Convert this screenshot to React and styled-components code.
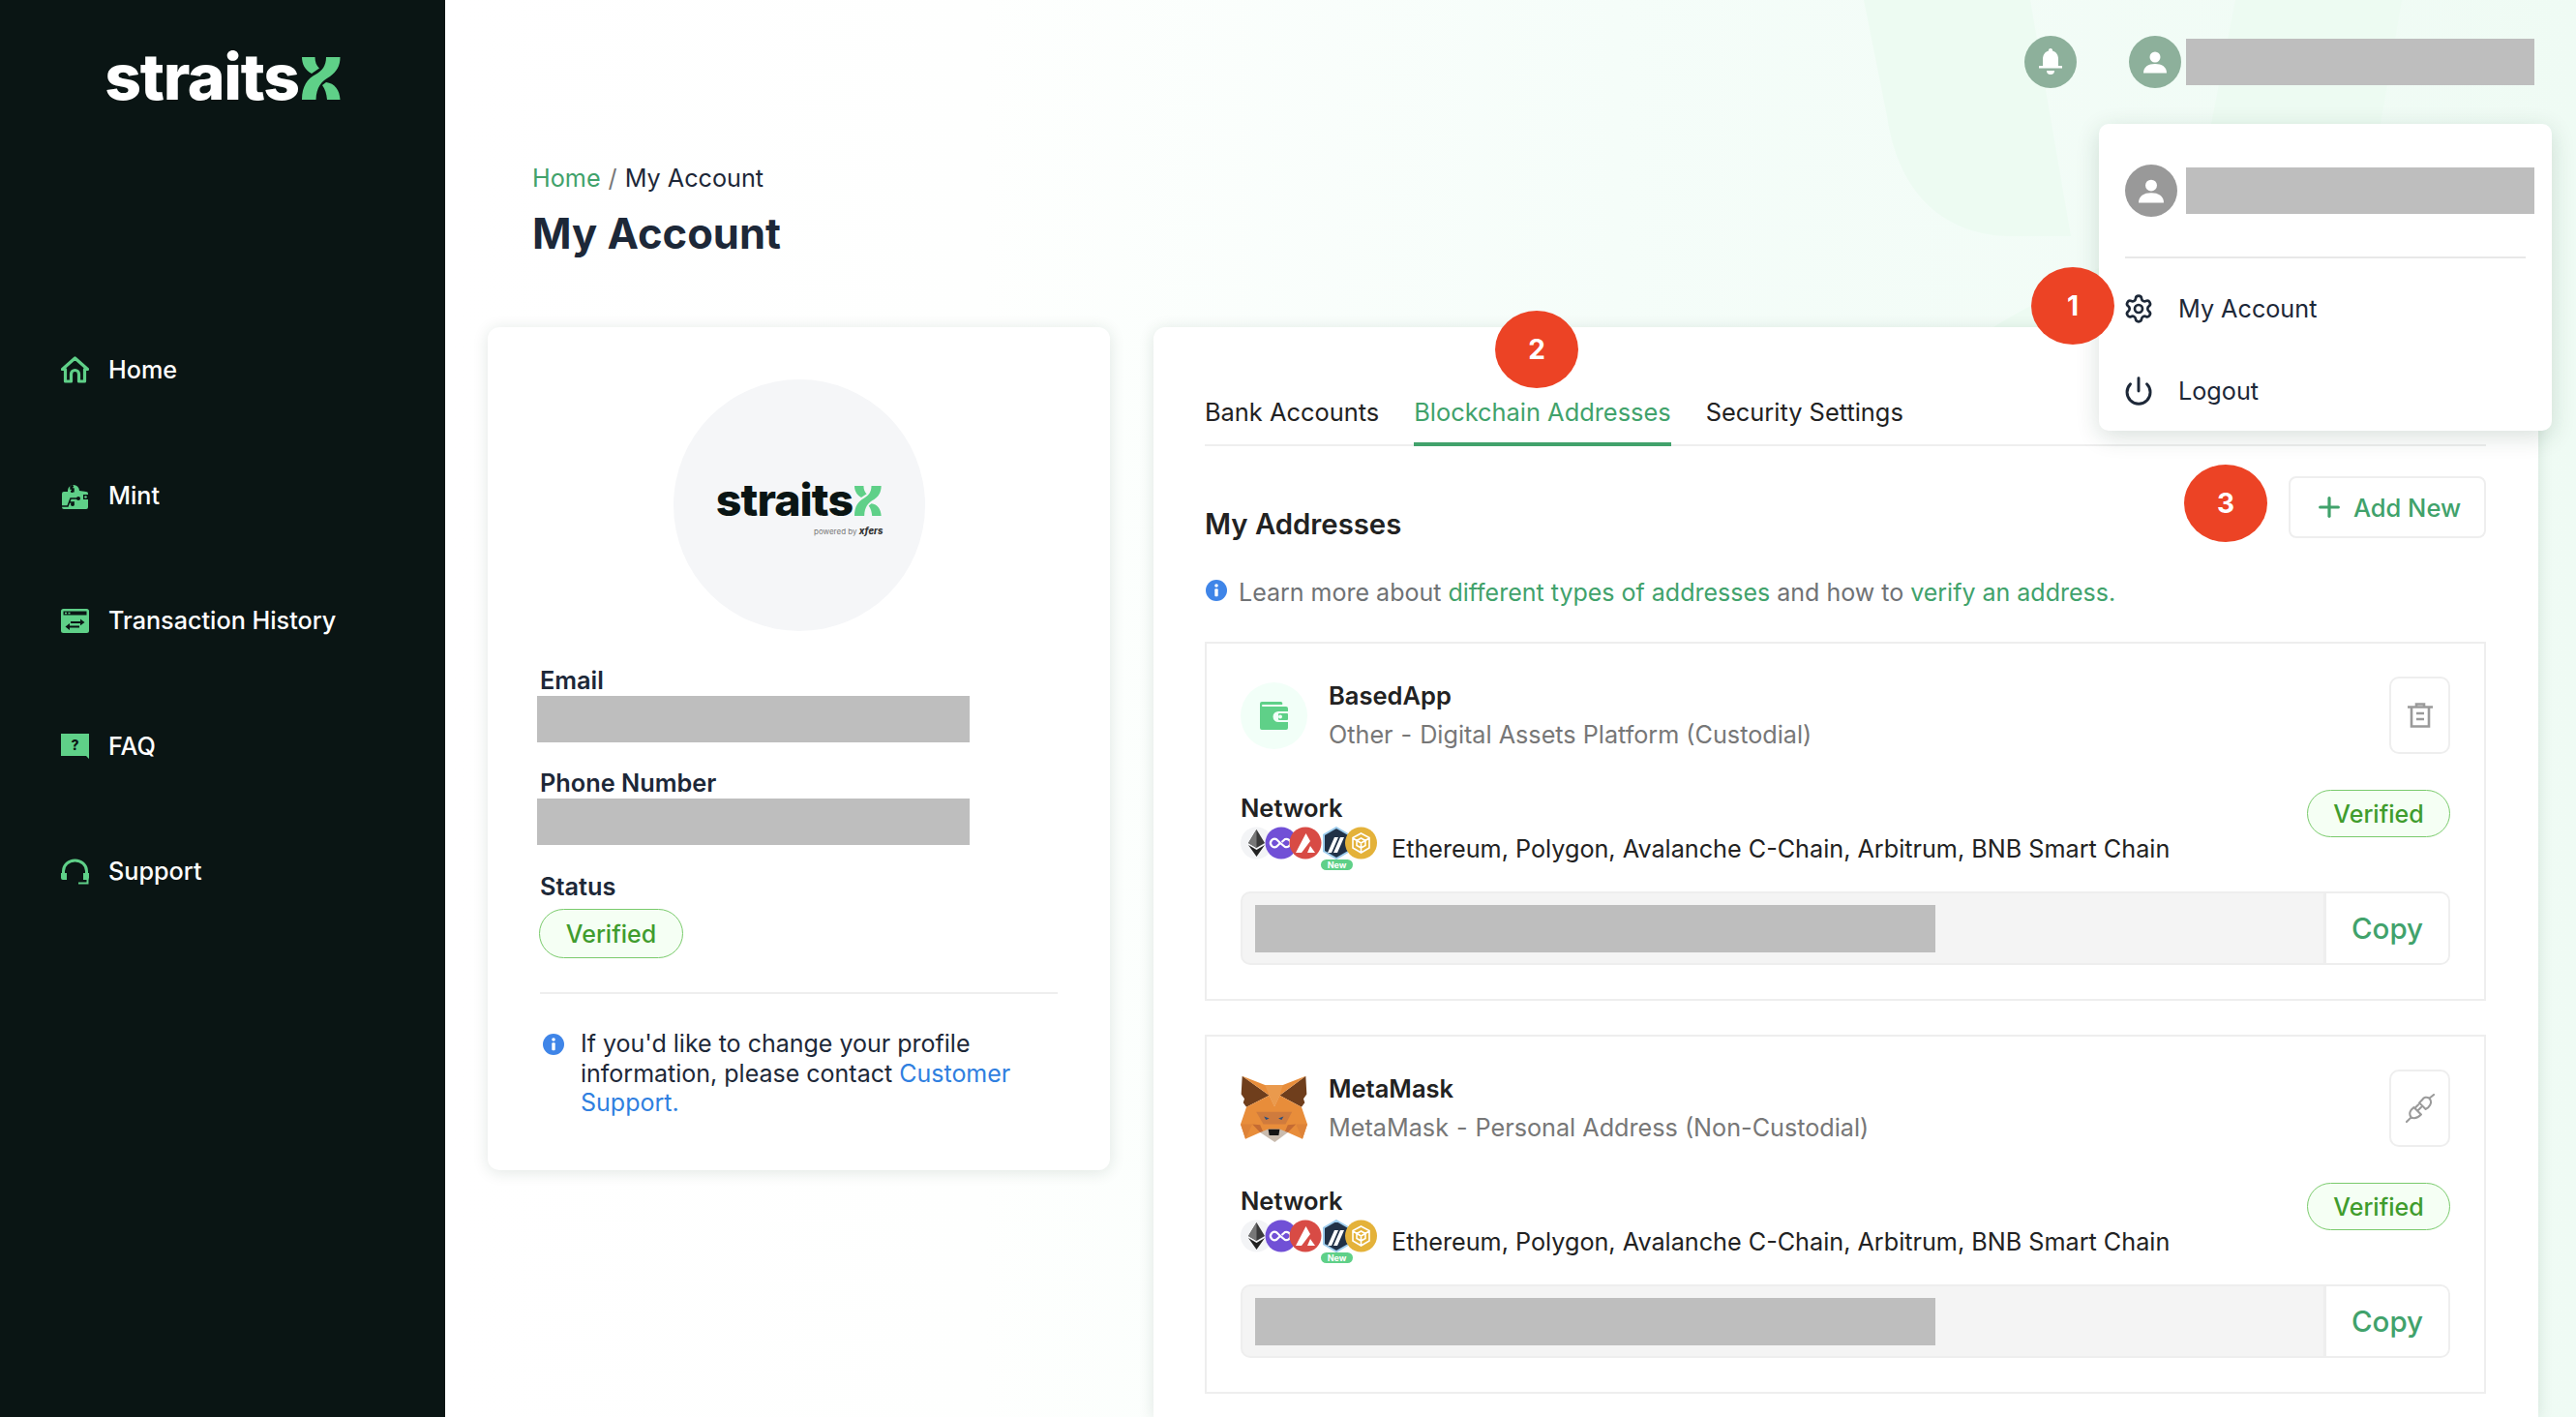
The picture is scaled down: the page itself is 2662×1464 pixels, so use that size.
import React from "react";
import styled, { createGlobalStyle } from "styled-components";
import { Settings, Power, Plus } from "lucide-react";

const Global = createGlobalStyle`
  html, body { margin: 0; padding: 0; height: 100%; overflow: hidden; }
  body { font-family: "Inter", "Liberation Sans", sans-serif; font-size: 25px; color: #222; }
  * { box-sizing: border-box; }
`;

const Shell = styled.div`display: flex; height: 100vh; overflow: hidden;`;
const Sidebar = styled.aside`width: 460px; flex: none; background: #0a1514; padding-top: 46px;`;
const LogoRow = styled.div`
  display: flex; align-items: baseline; justify-content: center; gap: ${p => p.$gap}px;
  font-family: "Inter", sans-serif; font-weight: 800;
  font-size: ${p => p.$size}px; line-height: 1; letter-spacing: ${p => p.$track}px;
  color: ${p => p.$color};
`;
const Nav = styled.nav`display: flex; flex-direction: column; gap: 89.6px; margin-top: 250px; padding-left: 63px;`;
const NavItem = styled.div`
  display: flex; align-items: center; gap: 20px; height: 40px;
  color: #fff; font-size: 25.2px; font-weight: 500;
`;
const Main = styled.main`
  position: relative; flex: 1; min-width: 0; overflow: hidden;
  background: linear-gradient(90deg, #fff 0%, #fefffe 25%, #f5fdf9 55%, #effbf4 100%);
`;
const Decor = styled.svg`position: absolute; left: 0; top: 0; pointer-events: none;`;
const Content = styled.div`position: relative; display: flex; flex-direction: column; height: 100%;`;
const TopBar = styled.header`display: flex; justify-content: flex-end; align-items: center; padding: 37px 43px 0 0;`;
const RoundIcon = styled.div`
  width: 54px; height: 54px; border-radius: 50%; flex: none;
  background: ${p => p.$bg}; display: flex; align-items: center; justify-content: center;
`;
const UserBlock = styled.div`display: flex; align-items: center; gap: 5px; margin-left: 54px;`;
const Redacted = styled.div`
  width: ${p => p.$w}px; height: ${p => p.$h || 48}px; background: #bebebe; flex: none;
  margin-left: ${p => p.$ml || 0}px;
`;
const PageHead = styled.div`padding: 77px 0 0 90px;`;
const Crumbs = styled.div`font-size: 25.2px; line-height: 32px; color: #1d2838;`;
const CrumbLink = styled.span`color: #41a26b;`;
const CrumbSep = styled.span`color: #777; margin: 0 8px;`;
const Title = styled.h1`margin: 13px 0 0; font-size: 43.5px; line-height: 56px; font-weight: 700; color: #1d2838;`;
const Columns = styled.div`display: flex; gap: 45px; padding: 69px 39px 0 44px; flex: 1; min-height: 0;`;
const ProfileCard = styled.section`
  width: 643px; height: 871px; flex: none; background: #fff; border-radius: 12px;
  box-shadow: 0 2px 16px rgba(20, 60, 40, .13); padding: 54px 54px 0;
`;
const Avatar = styled.div`
  width: 260px; height: 260px; border-radius: 50%; background: #f5f6f8; margin: 0 auto 34px;
  display: flex; flex-direction: column; align-items: center; justify-content: center; padding-top: 4px;
`;
const PoweredBy = styled.div`
  align-self: flex-end; margin: 3px 43px 0 0; font-size: 8px; line-height: 11px; color: #777;
  b { font-style: italic; font-weight: 800; color: #333; font-size: 9.5px; }
`;
const FieldLabel = styled.div`
  font-size: 25.3px; font-weight: 600; line-height: 33px; color: #1d2838; margin-top: ${p => p.$mt || 0}px;
`;
const Pill = styled.div`
  display: inline-flex; align-items: center; justify-content: center;
  width: ${p => p.$w}px; height: ${p => p.$h}px; margin-left: ${p => p.$ml || 0}px; margin-top: ${p => p.$mt || 0}px;
  border: 1.5px solid #7acb6c; border-radius: 26px; background: #f5fff4; color: #409c2d;
  font-size: 25px; font-weight: 500; flex: none;
`;
const Rule = styled.div`height: 2px; background: #eee; margin: 35px 0 36px;`;
const Note = styled.div`display: flex; gap: 17px; font-size: 25px; line-height: 30.5px; color: #1d2838;`;
const NoteIcon = styled.div`flex: none; margin: 3px 0 0 3px; height: 22px;`;
const Blue = styled.span`color: #2f7fe0;`;

const AccountCard = styled.section`
  flex: 1; min-width: 0; background: #fff; border-radius: 12px 12px 0 0;
  box-shadow: 0 2px 16px rgba(20, 60, 40, .13); padding: 72px 54px 0 53px;
`;
const Tabs = styled.div`display: flex; gap: 36px; border-bottom: 2px solid #eee;`;
const Tab = styled.div`
  font-size: 25.4px; line-height: 32px; padding-bottom: 15px; margin-bottom: -2px;
  color: ${p => p.$active ? "#41a26b" : "#222"};
  border-bottom: 4px solid ${p => p.$active ? "#41a26b" : "transparent"};
`;
const SectionRow = styled.div`display: flex; justify-content: space-between; align-items: flex-start; margin-top: 31px; height: 64px;`;
const SectionTitle = styled.h2`margin: 32px 0 0; font-size: 29.3px; line-height: 36px; font-weight: 600; color: #222;`;
const OutlineButton = styled.div`
  display: flex; align-items: center; justify-content: center; gap: 9px;
  width: 204px; height: 64px; border: 2px solid #eee; border-radius: 8px;
  color: #41a26b; font-size: 25.5px; font-weight: 500;
`;
const InfoLine = styled.div`
  display: flex; align-items: center; gap: 12px; margin-top: 40px; font-size: 25px; line-height: 32px; color: #6f7275;
  padding-left: 1px;
  svg { margin-top: -5px; }
`;
const Green = styled.span`color: #41a26b;`;
const AddressCard = styled.article`
  border: 2px solid #eee; height: 371px; padding: 34px 35px 0; margin-top: ${p => p.$mt}px;
`;
const CardHead = styled.div`display: flex; align-items: center; height: 80px;`;
const CardTitleBlock = styled.div`flex: 1; margin-left: 22px;`;
const CardName = styled.div`font-size: 25.5px; font-weight: 600; line-height: 40px; color: #222;`;
const CardSub = styled.div`font-size: 25.2px; line-height: 40px; color: #777;`;
const Dash = styled.span`margin: 0 8px;`;
const IconBadge = styled.div`
  width: 69px; height: 69px; border-radius: 50%; background: #f2fff8; flex: none;
  display: flex; align-items: center; justify-content: center;
`;
const SquareButton = styled.div`
  width: 63px; height: 80px; border: 2px solid #eee; border-radius: 10px; flex: none;
  display: flex; align-items: center; justify-content: center;
`;
const NetworkRow = styled.div`display: flex; justify-content: space-between; align-items: flex-start; margin-top: 37px;`;
const NetworkLabel = styled.div`font-size: 25.5px; font-weight: 600; line-height: 38px; color: #222;`;
const NetworkLine = styled.div`display: flex; gap: 15px; height: 40px;`;
const NetworkText = styled.div`font-size: 25.2px; line-height: 36px; color: #222; margin-top: 5px;`;
const CoinStack = styled.div`position: relative; width: 141px; height: 40px; flex: none;`;
const NewTag = styled.div`
  position: absolute; left: 83px; top: 34px; width: 33px; height: 11px; border-radius: 6px;
  background: #5fd088; color: #fff; font-size: 9px; font-weight: 700; line-height: 11px; text-align: center;
`;
const AddressRow = styled.div`
  display: flex; align-items: stretch; height: 76px; margin-top: 27px;
  border: 2px solid #eee; border-radius: 10px; background: #f4f4f4; overflow: hidden;
`;
const AddressField = styled.div`flex: 1; display: flex; align-items: center; padding-left: 13px;`;
const CopyButton = styled.div`
  width: 129px; background: #fff; border-left: 3px solid #eee; color: #41a26b;
  display: flex; align-items: center; justify-content: center; font-size: 29.5px; font-weight: 500;
`;
const Dropdown = styled.div`
  position: absolute; left: 1709px; top: 128px; width: 468px; height: 317px; background: #fff; border-radius: 10px;
  box-shadow: 0 6px 24px rgba(20, 60, 40, .16); padding: 42px 18px 0 27px;
`;
const DropUser = styled.div`display: flex; align-items: center; gap: 9px;`;
const DropRule = styled.div`height: 2px; background: #e8e8e8; margin: 41px 9px 0 0; width: 414px;`;
const DropItem = styled.div`
  display: flex; align-items: center; gap: 25px; height: 85px; font-size: 25.2px; color: #1d2838;
  margin-top: ${p => p.$first ? 9 : 0}px; margin-left: -2px;
`;
const Marker = styled.div`
  position: absolute; left: ${p => p.$x - 460}px; top: ${p => p.$y}px;
  width: 86px; height: 80px; border-radius: 50%; background: #ec4325; color: #fff;
  display: flex; align-items: center; justify-content: center; font-size: 28px; font-weight: 700;
`;

const XMark = ({ w, h }) => (
  <svg width={w} height={h} viewBox="0 0 40 44" fill="#5fd088">
    <path d="M25 0H39.5C39.5 9 36 15 29 20 20 25 15 31 14.5 44H0C0 30 6 22 14 18 21 14 25 9 25 0Z" />
    <path d="M0 0H13.5C13.5 5 15 9 18 11.5L10 17C3 13 0 7 0 0Z" />
    <path d="M25 26C34 27 39 34 39.5 44H26C25.5 38 24 33 21 29Z" />
  </svg>
);

const HomeIcon = () => (
  <svg width="29" height="28" viewBox="0 0 29 28" fill="none" stroke="#5fd088" strokeWidth="3.2" strokeLinejoin="round">
    <path d="M1.5 13.5 14.5 2 27.5 13.5H24.5V26H18.5V18.5A4 4 0 0 0 10.5 18.5V26H4.5V13.5Z" />
  </svg>
);
const MintIcon = () => (
  <svg width="29" height="29" viewBox="0 0 29 29">
    <path d="M1 13a2 2 0 0 1 2-2h4a6 6 0 0 1 0-1 6 6 0 0 1 12 0l7 1a2 2 0 0 1 2 2v14a2 2 0 0 1-2 2H3a2 2 0 0 1-2-2Z" fill="#5fd088" />
    <path d="M13 5.5h-3v2.6h3v2.6h-3M11.5 4v8" stroke="#0a1514" strokeWidth="1.5" fill="none" />
    <path d="M1 26h6l3-8h8M8 22h6" stroke="#0a1514" strokeWidth="1.6" fill="none" />
    <circle cx="18" cy="18" r="2" fill="#0a1514" /><circle cx="12" cy="24" r="2" fill="#0a1514" />
    <rect x="23" y="14" width="6" height="5" fill="#0a1514" /><circle cx="25.5" cy="16.5" r="1.3" fill="#5fd088" />
  </svg>
);
const HistoryIcon = () => (
  <svg width="29" height="25" viewBox="0 0 29 25">
    <rect width="29" height="25" rx="2.5" fill="#5fd088" />
    <rect x="2.5" y="2.5" width="24" height="4" fill="#0a1514" />
    <rect x="4" y="3.7" width="2" height="1.6" fill="#5fd088" /><rect x="7.5" y="3.7" width="2" height="1.6" fill="#5fd088" />
    <path d="M10 13h10v-2.5l4.5 3.5-4.5 3.3V15H10ZM19 17.5H9V15l-4.5 3.5L9 22v-2.5h10Z" fill="#0a1514" />
  </svg>
);
const FaqIcon = () => (
  <svg width="29" height="26" viewBox="0 0 29 26">
    <path d="M0 0H29V26L26 23H0Z" fill="#5fd088" />
    <text x="14.5" y="17" textAnchor="middle" fontFamily="Inter" fontWeight="800" fontSize="14" fill="#0a1514">?</text>
  </svg>
);
const SupportIcon = () => (
  <svg width="29" height="27" viewBox="0 0 29 27" fill="none">
    <path d="M2.5 16V13a12 11 0 0 1 24 0v3" stroke="#5fd088" strokeWidth="3" />
    <path d="M0 15H6V22H2A2 2 0 0 1 0 20ZM29 15H23V22H27A2 2 0 0 0 29 20Z" fill="#5fd088" />
    <path d="M27.5 21V25.5H18" stroke="#5fd088" strokeWidth="2" />
  </svg>
);
const BellIcon = () => (
  <svg width="26" height="28" viewBox="0 0 26 28" fill="#fff">
    <path d="M13 0a2 2 0 0 1 2 2.5C19 3.5 21 7 21 11v7h4v2.5H1V18h4v-7c0-4 2-7.5 6-8.5A2 2 0 0 1 13 0Z" />
    <path d="M9 23h8a4 4 0 0 1-8 0Z" />
  </svg>
);
const UserIcon = ({ size = 24 }) => (
  <svg width={size} height={size} viewBox="0 0 24 24" fill="#fff">
    <circle cx="12" cy="7" r="5.5" /><path d="M0 23.5C0 17 5 14 12 14s12 3 12 9.5Z" />
  </svg>
);
const InfoIcon = () => (
  <svg width="22" height="22" viewBox="0 0 22 22">
    <circle cx="11" cy="11" r="11" fill="#3f85e8" />
    <circle cx="11" cy="6" r="1.8" fill="#fff" /><rect x="9.3" y="9.2" width="3.4" height="8" rx="1" fill="#fff" />
  </svg>
);
const WalletIcon = () => (
  <svg width="29" height="29" viewBox="0 0 29 29" fill="#5fd088">
    <path d="M2 0h19a2 2 0 0 1 2 3H2.5a1.5 1.5 0 0 0 0 2H27a2 2 0 0 1 2 2v3H19a5 5 0 0 0 0 11h10v6a2 2 0 0 1-2 2H2a2 2 0 0 1-2-2V2a2 2 0 0 1 2-2Z" />
    <rect x="19" y="12" width="10" height="7" rx="1" /><circle cx="21" cy="15.5" r="2" fill="#f2fff8" />
  </svg>
);
const TrashIcon = () => (
  <svg width="26" height="26" viewBox="0 0 26 26" fill="none" stroke="#9a9a9a" strokeWidth="2.6">
    <path d="M0 4.5H26M9 4.5V1.5H17V4.5M4 4.5V24.5H22V4.5M9 11H17M9 17H17" />
  </svg>
);
const PlugIcon = () => (
  <svg width="30" height="30" viewBox="0 0 32 32" fill="none" stroke="#9a9a9a" strokeWidth="2.2" strokeLinecap="round" strokeLinejoin="round">
    <path d="M1 31 6 26M31 1 26 5M6 26C3 22 5 18 9 15L17 23C14 26 10 28 6 26ZM13 19 17 15M10 16 14 12M26 5C29 8 28 12 25 15L22 17 15 10 18 7C20 4 23 3 26 5Z" />
  </svg>
);

const Coins = () => (
  <CoinStack>
    <svg width="141" height="34" viewBox="0 0 141 34">
      <circle cx="16.5" cy="17" r="16.5" fill="#f3f4f6" />
      <path d="M16.5 3 25 17 16.5 22 8 17Z" fill="#3a3a3a" />
      <path d="M16.5 3V22L8 17Z" fill="#777" />
      <path d="M16.5 24 25 19 16.5 31 8 19Z" fill="#222" />
      <circle cx="42" cy="17" r="16.5" fill="#7150d6" />
      <path d="M41 17 37.5 13.5A4.2 4.2 0 1 0 37.5 20.5L41 17 46 21A4.2 4.2 0 1 0 46 13L42.5 16" fill="none" stroke="#fff" strokeWidth="2.2" />
      <circle cx="67" cy="17" r="16.5" fill="#d84b45" />
      <path d="M67.5 7 72 15 63 27H57ZM72 20 77 27H69Z" fill="#fff" />
      <path d="M99 1 112 8.5V25.5L99 33 86 25.5V8.5Z" fill="#213147" stroke="#9dcced" strokeWidth="2" />
      <path d="M97 11 90 27H94L101 11ZM103 11 96 27H100L107 11Z" fill="#fff" />
      <circle cx="124.5" cy="17" r="16.5" fill="#e4b23a" />
      <path d="M124.5 7 133 11.5V22L124.5 27 116 22V11.5ZM124.5 12 120 14.5V19.5L124.5 22 129 19.5V14.5ZM116 12 124.5 17 133 12M124.5 17V27" fill="none" stroke="#fff" strokeWidth="1.6" />
    </svg>
    <NewTag>New</NewTag>
  </CoinStack>
);

const Fox = () => (
  <svg width="69" height="69" viewBox="0 0 205 205">
    <path d="M5 2 88 62 18 97 8 84 12 72 2 58Z" fill="#6f3e1c" />
    <path d="M200 2 120 62 187 97 197 84 193 72 203 58Z" fill="#6f3e1c" />
    <path d="M5 2 75 30H130L200 2 120 62 104 95 88 62Z" fill="#e88d3a" />
    <path d="M18 97 88 62 104 95 120 62 187 97 205 150 190 195 145 175 60 175 15 195 0 150Z" fill="#e88d3a" />
    <path d="M75 30H130L120 62 104 95 88 62Z" fill="#ea9a4d" />
    <path d="M48 112H158L138 150H70Z" fill="#cf7b3d" />
    <path d="M0 150 36 150 15 195ZM205 150 170 150 190 195Z" fill="#de8338" />
    <path d="M36 150 60 152 70 175 60 175Z M170 150 145 152 135 175 145 175Z" fill="#c46b33" />
    <path d="M72 126 88 132 78 137Z M132 126 116 132 126 137Z" fill="#2b4f7e" />
    <path d="M60 175 85 165H120L145 175 105 205Z" fill="#c9bbae" />
    <path d="M85 166H120L117 184 88 184Z" fill="#151515" />
  </svg>
);

const navItems = [
  ["Home", HomeIcon], ["Mint", MintIcon], ["Transaction History", HistoryIcon], ["FAQ", FaqIcon], ["Support", SupportIcon],
];
const NETWORKS = "Ethereum, Polygon, Avalanche C-Chain, Arbitrum, BNB Smart Chain";

const Address = ({ mt, icon, name, kind, detail, action }) => (
  <AddressCard $mt={mt}>
    <CardHead>
      {icon}
      <CardTitleBlock>
        <CardName>{name}</CardName>
        <CardSub>{kind}<Dash>-</Dash>{detail}</CardSub>
      </CardTitleBlock>
      <SquareButton>{action}</SquareButton>
    </CardHead>
    <NetworkRow>
      <div>
        <NetworkLabel>Network</NetworkLabel>
        <NetworkLine><Coins /><NetworkText>{NETWORKS}</NetworkText></NetworkLine>
      </div>
      <Pill $w={148} $h={49}>Verified</Pill>
    </NetworkRow>
    <AddressRow>
      <AddressField><Redacted $w={703} $h={49} /></AddressField>
      <CopyButton>Copy</CopyButton>
    </AddressRow>
  </AddressCard>
);

export default function App() {
  return (
    <Shell>
      <Global />
      <Sidebar>
        <LogoRow $size={66} $track={-1.3} $gap={3} $color="#fff"><span>straits</span><XMark w={40} h={44} /></LogoRow>
        <Nav>
          {navItems.map(([label, Icon]) => (
            <NavItem key={label}><Icon />{label}</NavItem>
          ))}
        </Nav>
      </Sidebar>
      <Main>
        <Decor width="2202" height="400" viewBox="0 0 2202 400">
          <path d="M1466 0H1638L1680 244H1620C1540 244 1500 190 1490 120Z" fill="#edfbf2" />
          <path d="M1850 0H2022L2000 128C1980 230 1850 290 1640 345H1590C1650 300 1800 260 1825 128Z" fill="#edfbf2" />
        </Decor>
        <Content>
          <TopBar>
            <RoundIcon $bg="#8db09b"><BellIcon /></RoundIcon>
            <UserBlock>
              <RoundIcon $bg="#8db09b"><UserIcon /></RoundIcon>
              <Redacted $w={360} />
            </UserBlock>
          </TopBar>
          <PageHead>
            <Crumbs><CrumbLink>Home</CrumbLink><CrumbSep>/</CrumbSep>My Account</Crumbs>
            <Title>My Account</Title>
          </PageHead>
          <Columns>
            <ProfileCard>
              <Avatar>
                <LogoRow $size={46.5} $track={-0.9} $gap={2} $color="#0a1514"><span>straits</span><XMark w={28} h={31} /></LogoRow>
                <PoweredBy>powered by <b>xfers</b></PoweredBy>
              </Avatar>
              <FieldLabel>Email</FieldLabel>
              <Redacted $w={447} $ml={-3} />
              <FieldLabel $mt={25}>Phone Number</FieldLabel>
              <Redacted $w={447} $ml={-3} />
              <FieldLabel $mt={26}>Status</FieldLabel>
              <Pill $w={149} $h={51} $ml={-1} $mt={7}>Verified</Pill>
              <Rule />
              <Note>
                <NoteIcon><InfoIcon /></NoteIcon>
                <div>If you'd like to change your profile information, please contact <Blue>Customer Support.</Blue></div>
              </Note>
            </ProfileCard>
            <AccountCard>
              <Tabs>
                <Tab>Bank Accounts</Tab>
                <Tab $active>Blockchain Addresses</Tab>
                <Tab>Security Settings</Tab>
              </Tabs>
              <SectionRow>
                <SectionTitle>My Addresses</SectionTitle>
                <OutlineButton><Plus size={32} strokeWidth={2.4} />Add New</OutlineButton>
              </SectionRow>
              <InfoLine>
                <InfoIcon />
                <div>Learn more about <Green>different types of addresses</Green> and how to <Green>verify an address.</Green></div>
              </InfoLine>
              <Address mt={35} name="BasedApp" kind="Other" detail="Digital Assets Platform (Custodial)"
                icon={<IconBadge><WalletIcon /></IconBadge>} action={<TrashIcon />} />
              <Address mt={35} name="MetaMask" kind="MetaMask" detail="Personal Address (Non-Custodial)"
                icon={<Fox />} action={<PlugIcon />} />
            </AccountCard>
          </Columns>
        </Content>
        <Dropdown>
          <DropUser>
            <RoundIcon $bg="#999"><UserIcon size={26} /></RoundIcon>
            <Redacted $w={360} />
          </DropUser>
          <DropRule />
          <DropItem $first><Settings size={32} color="#1d2838" strokeWidth={2} />My Account</DropItem>
          <DropItem><Power size={32} color="#1d2838" strokeWidth={2.2} />Logout</DropItem>
        </Dropdown>
        <Marker $x={2099} $y={276}>1</Marker>
        <Marker $x={1545} $y={321}>2</Marker>
        <Marker $x={2257} $y={480}>3</Marker>
      </Main>
    </Shell>
  );
}
